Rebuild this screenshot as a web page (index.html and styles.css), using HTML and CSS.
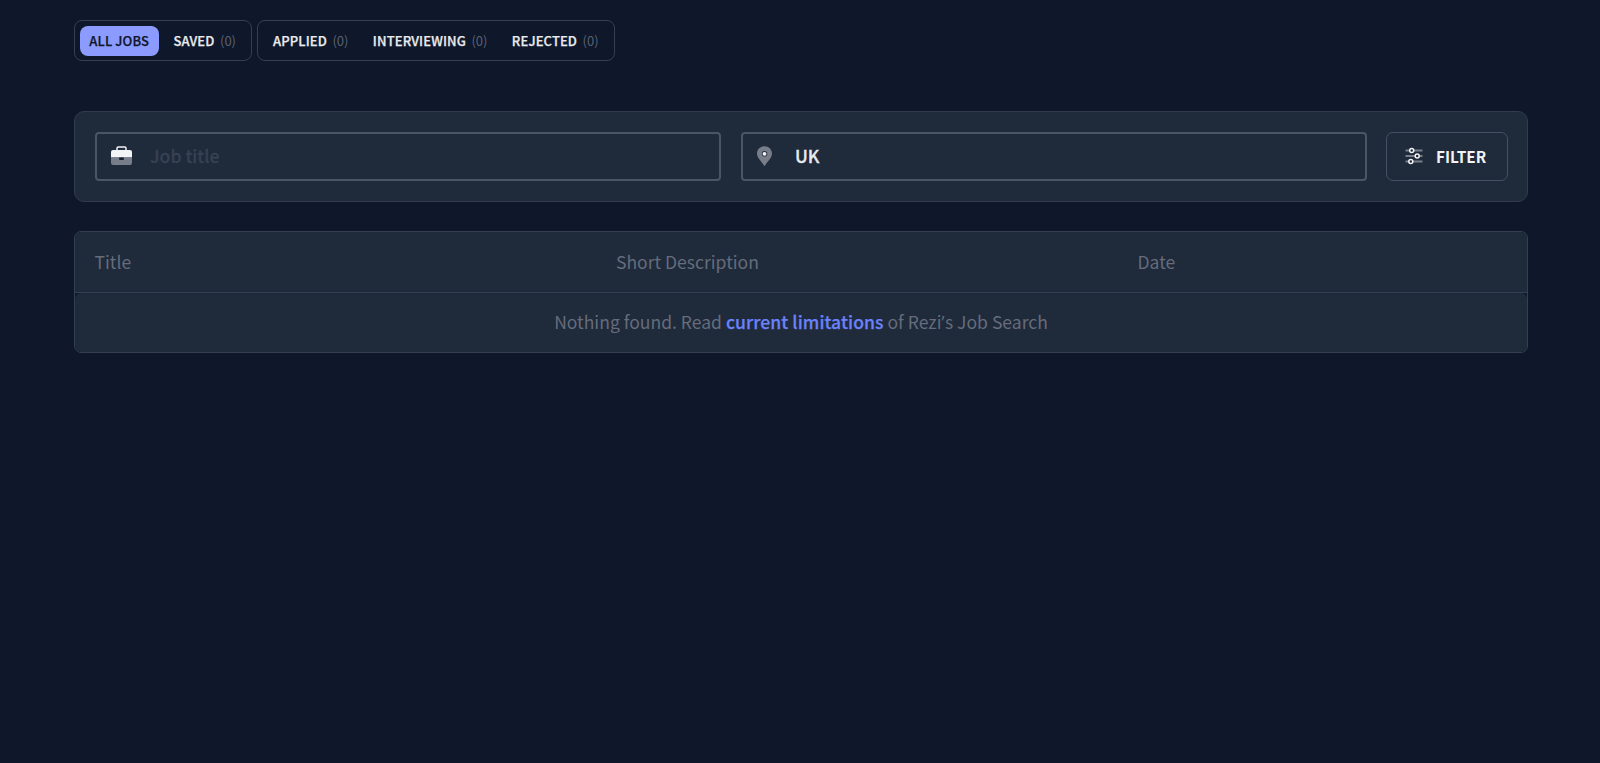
FILE: index.html
```html
<!DOCTYPE html>
<html lang="en">
<head>
<meta charset="utf-8">
<title>Job Search</title>
<link rel="stylesheet" href="styles.css">
</head>
<body>
<main class="page">
  <nav class="tabs">
    <div class="tab-group">
      <a class="tab tab-active"><span>ALL JOBS</span></a>
      <a class="tab"><span>SAVED</span> <span class="count">(0)</span></a>
    </div>
    <div class="tab-group tab-group-progress">
      <a class="tab"><span>APPLIED</span> <span class="count">(0)</span></a>
      <a class="tab"><span>INTERVIEWING</span> <span class="count">(0)</span></a>
      <a class="tab"><span>REJECTED</span> <span class="count">(0)</span></a>
    </div>
  </nav>
  <section class="search">
    <div class="field">
      <svg class="icon-case" width="21" height="20" viewBox="0 0 21 20">
        <path d="M6 5V2.300Q6 1 7.300 1h6.400Q15 1 15 2.300V5" fill="none" stroke="#f3f4f6" stroke-width="1.500"/>
        <path d="M0 11.500V6Q0 4 2 4h17q2 0 2 2v5.500z" fill="#f3f4f6"/>
        <path d="M0 11.500h21V17q0 2-2 2H2q-2 0-2-2z" fill="#777e89"/>
        <rect x="8" y="11.500" width="5" height="2.400" rx="1" fill="#172033"/>
      </svg>
      <span class="placeholder">Job title</span>
    </div>
    <div class="field">
      <svg class="icon-pin" width="16" height="21" viewBox="0 0 16 21">
        <path d="M7.500.2C3.200.2 0 3.400 0 7.600 0 12 4.500 15.500 7.500 20.200 10.500 15.500 15 12 15 7.600 15 3.400 11.800.2 7.500.2z" fill="#777e89"/>
        <circle cx="7.500" cy="7.800" r="2.800" fill="#283243"/>
        <circle cx="7.500" cy="7.800" r="1.900" fill="#f3f4f6"/>
      </svg>
      <span class="value">UK</span>
    </div>
    <button class="filter">
      <svg width="18" height="18" viewBox="0 0 18 18">
        <path d="M.5 3.500h17M.5 9h17M.5 14.500h17" stroke="#777e89" stroke-width="1.900"/>
        <g fill="#1f2937" stroke="#f3f4f6" stroke-width="1.500">
          <circle cx="6.700" cy="3.500" r="2"/>
          <circle cx="12.200" cy="9" r="2"/>
          <circle cx="5.800" cy="14.500" r="2"/>
        </g>
      </svg>
      <span>FILTER</span>
    </button>
  </section>
  <section class="table">
    <header class="table-head">
      <span>Title</span><span>Short Description</span><span>Date</span>
    </header>
    <div class="table-body">
      <p>Nothing found. Read <a class="link">current limitations</a> of Rezi<span class="apostrophe">’</span>s Job Search</p>
    </div>
  </section>
</main>
</body>
</html>
```
FILE: styles.css
```css
* { box-sizing: border-box; }
body {
  margin: 0;
  min-height: 763px;
  background: #0f172a;
  color: #656c7b;
  font-family: "Noto Sans CJK SC", "Noto Sans", sans-serif;
  font-size: 17.55px;
}
.page { padding: 20px 72px 0 74px; }
.tabs { display: flex; gap: 5px; height: 41px; }
.tab-group {
  display: flex;
  align-items: center;
  gap: 5px;
  width: 178px;
  padding: 0 5px;
  border: 1px solid #334152;
  border-radius: 8px;
}
.tab-group-progress { width: 358px; gap: 4.4px; }
.tab {
  display: flex;
  align-items: center;
  justify-content: center;
  gap: 5.5px;
  height: 30px;
  padding: 0 10px 1px;
  border-radius: 8px;
  color: #e9ebee;
  font-size: 13px;
  font-weight: 500;
  letter-spacing: 0.12px;
  white-space: nowrap;
  -webkit-text-stroke: 0.25px;
}
.tab-active { width: 80px; padding: 0 0 1px; background: #8c9bff; color: #0f172a; }
.count { color: #596171; font-weight: 400; letter-spacing: 0; -webkit-text-stroke: 0; }
.search {
  display: grid;
  grid-template-columns: 626px 626px 122px;
  gap: 20px 19.5px;
  margin-top: 50px;
  height: 91px;
  padding: 20px;
  border: 1px solid #303c4d;
  border-radius: 10px;
  background: #1f2a3b;
}
.field {
  display: flex;
  align-items: center;
  height: 49px;
  padding: 0 0 1px 14px;
  border: 2px solid #495666;
  border-radius: 4px;
  font-weight: 500;
  -webkit-text-stroke: 0.3px;
}
.placeholder { margin-left: 18px; padding-bottom: 2px; color: #364152; }
.value { margin-left: 22.5px; padding-bottom: 2px; color: #e9ebee; }
.filter {
  display: flex;
  align-items: center;
  gap: 13px;
  height: 49px;
  padding: 0 0 1px 18px;
  border: 1px solid #455263;
  border-radius: 7px;
  background: transparent;
  color: #f3f4f6;
  font: 700 15.3px "Noto Sans CJK SC", sans-serif;
}
.table {
  margin-top: 29px;
  border: 1px solid #334051;
  border-radius: 7px;
  background: #0f172a;
}
.table-head {
  display: grid;
  grid-template-columns: 521.5px 521.5px 1fr;
  align-items: center;
  height: 61px;
  padding: 0 0 2px 19.5px;
  border-bottom: 1px solid #334051;
  border-radius: 6px 6px 0 0;
  background: #1f2a3b;
}
.table-body {
  display: flex;
  align-items: center;
  justify-content: center;
  height: 59px;
  padding-bottom: 2px;
  border-radius: 6px;
  background: #1f2a3b;
}
.table-body p { margin: 0; }
.link { color: #6b82f9; font-weight: 500; letter-spacing: 0.08px; -webkit-text-stroke: 0.25px; }
.apostrophe { margin-right: 0.5px; font-family: "Open Sans", sans-serif; }
```
